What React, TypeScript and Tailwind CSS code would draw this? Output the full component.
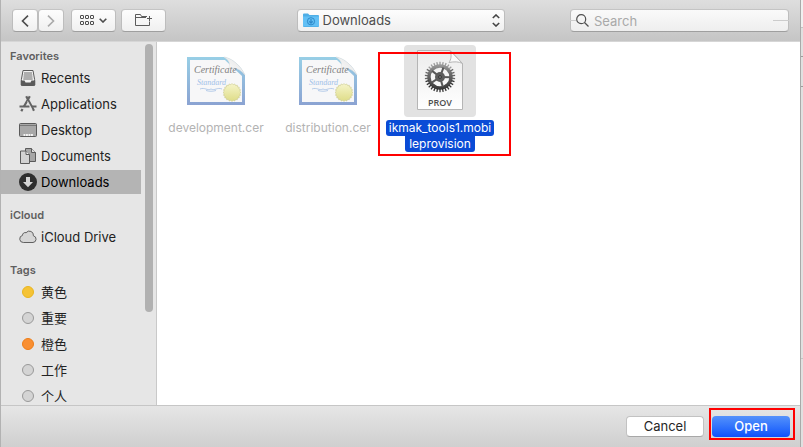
import React from "react";

const control =
  "h-[23px] items-center justify-center rounded border border-t-[#c4c4c4] border-x-[#bdbdbd] border-b-[#9f9f9f] bg-linear-to-b from-[#fdfdfd] to-[#f0f0f0] text-[#4d4d4d]";

function RecentsIcon() {
  return (
    <svg width="18" height="18" viewBox="0 0 18 18" fill="none">
      <path d="M4 1.500h10l1.600 9v5.200a.8.8 0 0 1-.8.8H3.200a.8.8 0 0 1-.8-.8v-5.200z" fill="#f2f2f2" stroke="#5a5a5a" />
      <path d="M5 4h8M4.700 6h8.600M4.500 8h9M4.300 10h9.400" stroke="#6a6a6a" />
      <path d="M1.800 11.500h3.700l1 2h5l1-2h3.700v4.300a1 1 0 0 1-1 1H2.800a1 1 0 0 1-1-1z" fill="#5a5a5a" />
    </svg>
  );
}

function ApplicationsIcon() {
  return (
    <svg width="18" height="18" viewBox="0 0 18 18" fill="none" stroke="#636363" strokeWidth="2.200">
      <path d="M10.800 1.300 4.800 11.800M7.200 1.300l7.800 14.500M3.500 14l-1.200 2.200" />
      <path d="M.500 11.500h10M13 11.500h4.500" />
      <path d="m8.500 6.200 4.500 8.300" stroke="#e6e6e6" strokeWidth=".7" />
    </svg>
  );
}

function DesktopIcon() {
  return (
    <svg width="18" height="18" viewBox="0 0 18 18" fill="none">
      <rect x=".5" y="2.500" width="17" height="13" rx="1" fill="#a8a8a8" stroke="#5a5a5a" />
      <path d="M1 4.500h16" stroke="#777" />
      <path d="M4.500 14h9.500" stroke="#f4f4f4" strokeWidth="2" strokeDasharray="1.900 .6" />
    </svg>
  );
}

function DocumentsIcon() {
  return (
    <svg width="18" height="18" viewBox="0 0 18 18" fill="#bdbdbd" stroke="#5a5a5a">
      <path d="M6.500 1.500h6l4 4v9h-10z" fill="#a5a5a5" />
      <path d="M12.500 1.500v4h4" fill="#ddd" />
      <path d="M1.500 4h5.500l3.500 3.500v9h-9z" fill="#d2d2d2" />
      <path d="M7 4v3.500h3.500" fill="#eee" />
    </svg>
  );
}

function DownloadsIcon() {
  return (
    <svg width="18" height="18" viewBox="0 0 18 18">
      <circle cx="9" cy="9" r="9" fill="#2f2f2f" />
      <path d="M7 4h4v5h3l-5 5.200L4 9h3z" fill="#d5d5d5" />
    </svg>
  );
}

function CloudIcon() {
  return (
    <svg width="18" height="18" viewBox="0 0 18 18" fill="#d6d6d6" stroke="#606060">
      <path d="M4.300 14.500a3.600 3.600 0 0 1-.8-7.100 2.700 2.700 0 0 1 3.600-2.700 4.100 4.100 0 0 1 7.300 3.100 3.400 3.400 0 0 1-.4 6.700z" />
    </svg>
  );
}

function Tag({ className }: { className: string }) {
  return (
    <span className="flex w-[18px] justify-center">
      <span className={`size-3 rounded-full border ${className}`} />
    </span>
  );
}

const grayTag = "border-[#999] bg-[#d4d4d4]";

const sections = [
  {
    title: "Favorites",
    items: [
      { name: "Recents", icon: <RecentsIcon /> },
      { name: "Applications", icon: <ApplicationsIcon /> },
      { name: "Desktop", icon: <DesktopIcon /> },
      { name: "Documents", icon: <DocumentsIcon /> },
      { name: "Downloads", icon: <DownloadsIcon />, selected: true },
    ],
  },
  { title: "iCloud", items: [{ name: "iCloud Drive", icon: <CloudIcon /> }] },
  {
    title: "Tags",
    items: [
      { name: "黄色", icon: <Tag className="border-[#e9b51f] bg-[#f5c335]" /> },
      { name: "重要", icon: <Tag className={grayTag} /> },
      { name: "橙色", icon: <Tag className="border-[#ee7d17] bg-[#f98f32]" /> },
      { name: "工作", icon: <Tag className={grayTag} /> },
      { name: "个人", icon: <Tag className={grayTag} /> },
    ],
  },
] as { title: string; items: { name: string; icon: React.ReactNode; selected?: boolean }[] }[];

function Sidebar() {
  return (
    <nav className="flex w-[156px] shrink-0 justify-between overflow-hidden border-r border-[#c9c9c9] bg-[#e6e6e6]">
      <div className="flex w-[140px] flex-col gap-[11px] pt-1">
        {sections.map((section) => (
          <section key={section.title}>
            <h2 className="flex h-5 items-center pl-[9px] text-[11px] font-semibold text-[#5f5f5f]">{section.title}</h2>
            <ul className="flex flex-col gap-0.5">
              {section.items.map((item) => (
                <li key={item.name}>
                  <button
                    className={`flex h-6 w-full items-center gap-1 pl-[18px] text-[13px] leading-5 whitespace-nowrap ${item.selected ? "bg-[#b4b4b4] text-black" : "text-[#222]"}`}
                  >
                    {item.icon}
                    {item.name}
                  </button>
                </li>
              ))}
            </ul>
          </section>
        ))}
      </div>
      <div className="mt-0.5 mr-[3px] h-[268px] w-2 rounded-full bg-[#b1b1b1]" />
    </nav>
  );
}

function Toolbar() {
  return (
    <header className="grid h-[42px] shrink-0 grid-cols-[1fr_208px_1fr] items-center border-b border-[#d6d6d6] bg-linear-to-b from-[#dedede] to-[#c5c5c5] px-[11px]">
      <div className="flex">
        <button aria-label="Back" className={`${control} flex w-[26px]`}>
          <svg width="8" height="12" viewBox="0 0 8 12" fill="none" stroke="currentColor" strokeWidth="1.600">
            <path d="M7 .7 1.500 6 7 11.300" />
          </svg>
        </button>
        <button aria-label="Forward" className={`${control} flex w-[26px]`}>
          <svg width="8" height="12" viewBox="0 0 8 12" fill="none" stroke="#aaa" strokeWidth="1.600">
            <path d="M1 .7 6.500 6 1 11.300" />
          </svg>
        </button>
        <button aria-label="View options" className={`${control} ml-[7px] flex w-[45px] gap-1`}>
          <svg width="15" height="11" viewBox="0 0 15 11" fill="none" stroke="currentColor">
            {[0.5, 5.5, 10.5].map((x) => (
              <g key={x}>
                <rect x={x} y=".5" width="3" height="3" rx=".4" />
                <rect x={x} y="6.500" width="3" height="3" rx=".4" />
              </g>
            ))}
          </svg>
          <svg width="8" height="5" viewBox="0 0 8 5" fill="none" stroke="currentColor" strokeWidth="1.600">
            <path d="m.7.700 3.300 3.300L7.300.7" />
          </svg>
        </button>
        <button aria-label="New folder" className={`${control} ml-[5px] flex w-[45px]`}>
          <svg width="17" height="13" viewBox="0 0 17 13" fill="none" stroke="#5c5c5c">
            <path d="M12 2.500H6.500L5.500.5H.5v11h14V7.500M.5 3.500H11M12 4.500h5M14.500 2v5" />
          </svg>
        </button>
      </div>
      <div className="relative">
        <select
          aria-label="Location"
          className={`${control} block w-full appearance-none pr-5 pl-[25px] text-[13px] leading-[21px]`}
        >
          <option>Downloads</option>
        </select>
        <svg className="pointer-events-none absolute top-1 left-1.5" width="16" height="15" viewBox="0 0 16 15">
          <path d="M0 1.500a1 1 0 0 1 1-1h4l1.500 1.500H15a1 1 0 0 1 1 1V13a1 1 0 0 1-1 1H1a1 1 0 0 1-1-1z" fill="#4faee6" />
          <path d="M0 3.500h16v9a.8.8 0 0 1-.8.800H.8a.8.8 0 0 1-.8-.8z" fill="#62c0f5" />
          <circle cx="8" cy="8.300" r="3.600" fill="none" stroke="#2f89c9" />
          <path d="M8 6v4M6.200 8.400 8 10.200l1.800-1.800" fill="none" stroke="#2f89c9" strokeWidth="1.200" />
        </svg>
        <svg
          className="pointer-events-none absolute top-[5px] right-[5px]"
          width="8"
          height="13"
          viewBox="0 0 8 13"
          fill="none"
          stroke="#444"
          strokeWidth="1.600"
        >
          <path d="m.8 4 3.200-3 3.200 3M.8 9 4 12l3.200-3" />
        </svg>
      </div>
      <div className="relative w-[219px] justify-self-end">
        <input
          type="search"
          aria-label="Search"
          placeholder="Search"
          className="block h-[23px] w-full rounded border border-t-[#c4c4c4] border-x-[#bdbdbd] border-b-[#9f9f9f] bg-linear-to-b from-[#fafafa] to-[#eee] pl-[23px] text-[13px] leading-5 text-[#333] placeholder:text-[#a9a9a9]"
        />
        <span className="absolute top-[11px] left-0 h-px w-1.5 bg-[#ccc]" />
        <span className="absolute top-[11px] right-0 h-px w-4 bg-[#ccc]" />
        <svg className="absolute top-[5px] left-1.5" width="13" height="13" viewBox="0 0 13 13" fill="none" stroke="#505050" strokeWidth="1.200">
          <circle cx="5.200" cy="5.200" r="4.500" />
          <path d="m8.500 8.500 4 4" />
        </svg>
      </div>
    </header>
  );
}

function CertificateIcon() {
  const seal = Array.from({ length: 40 }, (_, i) => {
    const r = i % 2 ? 7.8 : 9;
    const a = (i * Math.PI) / 20;
    return `${46 + r * Math.cos(a)},${36.5 + r * Math.sin(a)}`;
  }).join(" ");
  return (
    <svg width="60" height="50" viewBox="0 0 60 50">
      <defs>
        <linearGradient id="frame" x1="0" y1="0" x2="0" y2="1">
          <stop offset="0" stopColor="#98cfe6" />
          <stop offset="1" stopColor="#8ba3d2" />
        </linearGradient>
        <linearGradient id="curl" x1="0" y1="1" x2="1" y2="0">
          <stop offset="0" stopColor="#fff" />
          <stop offset="1" stopColor="#e2e2e2" />
        </linearGradient>
        <linearGradient id="seal" x1="0" y1="0" x2="0" y2="1">
          <stop offset="0" stopColor="#f6f5cb" />
          <stop offset="1" stopColor="#dedc86" />
        </linearGradient>
      </defs>
      <path d="M1 1h37c8 1 17 9 21 18v30H1z" fill="url(#frame)" />
      <path d="M4 4h35l17 16v26H4z" fill="#f7f7f8" />
      <path d="M38 1c6 4 6 7 5 11 7-1 12 2 16 7C55 10 46 2 38 1z" fill="url(#curl)" stroke="#dcdcdc" strokeWidth=".5" />
      <text x="8" y="17" className="font-['Liberation_Serif',serif] text-[10px] italic" fill="#808080">
        Certificate
      </text>
      <text x="11" y="29" className="font-['Liberation_Serif',serif] text-[8px] italic" fill="#9fc0e8">
        Standard
      </text>
      <path d="M14 33c5-2 7 2 11 0 4 2 6-2 11 0M20 34.500c3 1 7 1 10 0" fill="none" stroke="#a5c0e4" strokeWidth=".8" />
      <polygon points={seal} fill="url(#seal)" stroke="#cbc98c" strokeWidth=".6" />
    </svg>
  );
}

function ProvisionIcon() {
  const teeth = Array.from({ length: 30 }, (_, i) => i * 12);
  const spokes = [20, 92, 164, 236, 308];
  return (
    <svg width="46" height="62" viewBox="0 0 46 62">
      <defs>
        <linearGradient id="gear" gradientUnits="userSpaceOnUse" x1="0" y1="12" x2="0" y2="43">
          <stop offset="0" stopColor="#a6a6a6" />
          <stop offset=".4" stopColor="#6a6a6a" />
          <stop offset="1" stopColor="#2c2c2c" />
        </linearGradient>
        <linearGradient id="page" x1="0" y1="0" x2="0" y2="1">
          <stop offset="0" stopColor="#ececec" />
          <stop offset="1" stopColor="#fff" />
        </linearGradient>
      </defs>
      <path d="M.5.5H33l12.500 13v46H.5z" fill="url(#page)" stroke="#b5b5b5" />
      <path d="M33 .5c2 5 1 9-1 12 5-1 10-1 13.500 1z" fill="#fafafa" stroke="#b5b5b5" />
      <circle cx="23" cy="27" r="11" fill="none" stroke="url(#gear)" strokeWidth="3.400" />
      {teeth.map((angle) => (
        <path
          key={angle}
          d="M23 15v-3.200"
          stroke={angle > 100 && angle < 260 ? "#333" : angle > 50 && angle < 310 ? "#666" : "#9a9a9a"}
          strokeWidth="1.300"
          transform={`rotate(${angle} 23 27)`}
        />
      ))}
      {spokes.map((angle) => (
        <path key={angle} d="M23 17v10" stroke="#585858" strokeWidth="2" transform={`rotate(${angle} 23 27)`} />
      ))}
      <circle cx="23" cy="27" r="5" fill="#5c5c5c" />
      <circle cx="23" cy="27" r="1.500" fill="#747474" stroke="#3a3a3a" />
      <text x="23" y="56" textAnchor="middle" className="font-['Open_Sans',sans-serif] text-[9px] font-semibold" fill="#4c4c4c">
        PROV
      </text>
    </svg>
  );
}

function FileBrowser() {
  return (
    <main className="min-w-0 flex-1 bg-white pt-[3px] pl-[3px]">
      <ul className="flex flex-wrap text-[12px]">
        {["development.cer", "distribution.cer"].map((name) => (
          <li key={name} className="flex w-28 flex-col items-center text-[#b3b3b3]">
            <div className="flex h-[72px] items-center">
              <CertificateIcon />
            </div>
            <span className="mt-[3px] leading-4">{name}</span>
          </li>
        ))}
        <li className="relative flex w-28 flex-col items-center">
          <div className="flex size-[72px] items-center justify-center rounded bg-[#e2e2e2]">
            <ProvisionIcon />
          </div>
          <div className="mt-[3px] flex flex-col items-center leading-4 text-white">
            <span className="rounded-[3px] bg-[#0a4bd6] px-[3px]">ikmak_tools1.mobi</span>
            <span className="rounded-b-[3px] bg-[#0a4bd6] px-1">leprovision</span>
          </div>
          <div className="pointer-events-none absolute top-[7px] -left-1.5 h-[104px] w-[133px] border-2 border-[#f00]" />
        </li>
      </ul>
    </main>
  );
}

function Footer() {
  return (
    <footer className="flex h-[42px] shrink-0 items-center justify-end gap-2 border-t border-[#c6c6c6] bg-linear-to-b from-[#e6e6e6] to-[#cfcfcf] pr-2.5 text-[13px]">
      <button className="h-[21px] w-[78px] rounded border border-[#c2c2c2] border-b-[#a8a8a8] bg-white leading-none text-[#262626]">
        Cancel
      </button>
      <div className="relative">
        <button className="block h-[21px] w-[78px] rounded bg-linear-to-b from-[#5491fb] to-[#0f50fb] leading-none font-medium text-white">
          Open
        </button>
        <div className="pointer-events-none absolute -top-2 -right-[5px] -bottom-[3px] -left-[3px] border-2 border-[#f00]" />
      </div>
    </footer>
  );
}

function BackgroundWindowEdge() {
  return (
    <div className="flex w-0.5 shrink-0 flex-col bg-[#e0e0e0]">
      <div className="h-7 border-b border-[#c4c4c4] bg-[#f0f0f0]" />
      <div className="h-[29px] border-b border-[#9c9c9c]" />
      <div className="h-[30px] border-b border-[#9c9c9c]" />
      <div className="h-[272px] border-b border-[#c4c4c4]" />
    </div>
  );
}

export default function App() {
  return (
    <div className="flex h-screen font-[Inter,'Noto_Sans_CJK_SC',sans-serif]">
      <div className="flex min-w-0 flex-1 flex-col border-r border-l border-r-[#a9a9a9] border-l-[#b2b2b2]">
        <Toolbar />
        <div className="flex min-h-0 flex-1">
          <Sidebar />
          <FileBrowser />
        </div>
        <Footer />
      </div>
      <BackgroundWindowEdge />
    </div>
  );
}
